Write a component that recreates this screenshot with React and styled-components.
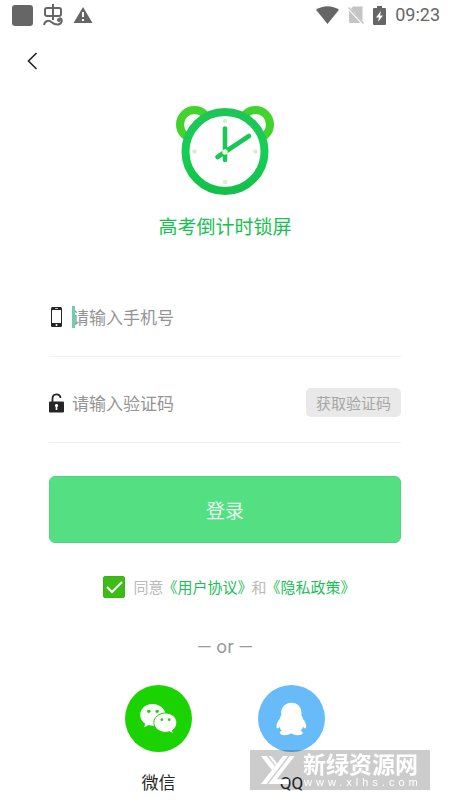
import {useState} from "react";
import styled, {createGlobalStyle} from "styled-components";

const GlobalStyle = createGlobalStyle`
    * {
        box-sizing: border-box;
    }

    body {
        margin: 0;
        background: #ffffff;
        font-family: Roboto, "Noto Sans CJK SC", sans-serif;
    }

    button, input {
        font-family: inherit;
    }
`;

const Page = styled.div`
    display: flex;
    flex-flow: column;
`;

const StatusBar = styled.header`
    display: flex;
    align-items: center;
    justify-content: space-between;
    height: 30px;
    padding: 0 10px 0 12px;
    color: #666666;
`;

const StatusGroup = styled.div`
    display: flex;
    align-items: center;
    gap: ${({gap}) => `${gap}px`};
`;

const Clock = styled.time`
    font-size: 18px;
    line-height: 30px;
`;

const NavBar = styled.nav`
    display: flex;
    align-items: center;
    height: 62px;
    padding: 0 20px;
`;

const BackButton = styled.button`
    display: flex;
    padding: 4px;
    border: 0;
    background: none;
    cursor: pointer;
`;

const Brand = styled.section`
    display: flex;
    flex-flow: column;
    align-items: center;
    gap: 17px;
    padding: 13px 0 34px;
`;

const BrandName = styled.h1`
    margin: 0;
    color: #18c14f;
    font-size: 19px;
    font-weight: 400;
    line-height: 30px;
`;

const Form = styled.form`
    display: flex;
    flex-flow: column;
    padding: 0 49px;
`;

const Field = styled.div`
    display: flex;
    align-items: center;
    gap: 8px;
    height: 80px;
    margin-bottom: 6px;
    border-bottom: 1px solid #f1f1f1;
`;

const FieldIcon = styled.label`
    display: flex;
    justify-content: center;
    width: 15px;
`;

const InputWrap = styled.div`
    position: relative;
    display: flex;
    flex: 1;
    min-width: 0;
`;

const Caret = styled.span`
    position: absolute;
    left: 0;
    top: 2px;
    width: 3px;
    height: 22px;
    background: #66d3ad;
`;

const TextInput = styled.input`
    width: 100%;
    padding: 2px 0 0;
    border: 0;
    outline: 0;
    background: none;
    color: #333333;
    font-size: 17px;
    line-height: 24px;

    &::placeholder {
        color: #949494;
        opacity: 1;
    }
`;

const CodeButton = styled.button`
    height: 29px;
    padding: 0 10px;
    border: 0;
    border-radius: 5px;
    background: #e9e9e9;
    color: #a6a6a6;
    font-size: 15px;
    white-space: nowrap;
    cursor: pointer;
`;

const LoginButton = styled.button`
    height: 67px;
    margin-top: 27px;
    border: 1px solid #4fd67c;
    border-radius: 6px;
    background: #55df83;
    color: #e6fbed;
    font-size: 19px;
    cursor: pointer;
`;

const Agreement = styled.div`
    display: flex;
    align-items: center;
    justify-content: center;
    gap: 8px;
    height: 30px;
    margin-top: 29px;
    padding-left: 8px;
    color: #b9b9b9;
    font-size: 15px;
    line-height: 30px;
    white-space: nowrap;
`;

const CheckBox = styled.span`
    display: grid;

    & > * {
        grid-area: 1 / 1;
    }

    svg {
        pointer-events: none;
    }
`;

const CheckInput = styled.input`
    appearance: none;
    width: 22px;
    height: 22px;
    margin: 0;
    border: 1px solid #37b512;
    border-radius: 2px;
    background: ${({checked}) => checked ? "#3dbb17" : "#ffffff"};
    cursor: pointer;
`;

const AgreementText = styled.span`
    padding-top: 2px;
`;

const AgreementLink = styled.a`
    margin: 0 -1px;
    color: #1abf55;
    text-decoration: none;
`;

const Divider = styled.p`
    margin: 30px 0 0;
    color: #9b9b9b;
    font-size: 19px;
    line-height: 30px;
    text-align: center;
`;

const Socials = styled.section`
    display: flex;
    justify-content: center;
    gap: 66px;
    padding-top: 23px;
`;

const SocialButton = styled.button`
    display: flex;
    flex-flow: column;
    align-items: center;
    gap: 19px;
    padding: 0;
    border: 0;
    background: none;
    color: #262626;
    font-size: 17px;
    line-height: 24px;
    cursor: pointer;
`;

const SocialCircle = styled.span`
    display: flex;
    align-items: center;
    justify-content: center;
    width: 67px;
    height: 67px;
    border-radius: 50%;
    background: ${({color}) => color};
`;

const Watermark = styled.aside`
    position: fixed;
    right: 20px;
    bottom: 10px;
    display: flex;
    gap: 6px;
    width: 180px;
    height: 40px;
    padding-left: 9px;
    background: rgba(0, 0, 0, 0.2);
    color: #ffffff;
    pointer-events: none;
`;

const WatermarkText = styled.div`
    display: flex;
    flex-flow: column;
    padding-top: 4px;
`;

const WatermarkName = styled.strong`
    font-size: 23px;
    font-weight: 700;
    line-height: 24px;
`;

const WatermarkSite = styled.span`
    padding-left: 1px;
    font-family: "Liberation Sans", sans-serif;
    font-size: 11px;
    letter-spacing: 4px;
    line-height: 8px;
`;

const BugIcon = () => (
    <svg width="20" height="22" viewBox="0 0 20 22" fill="none" stroke="#666666" strokeWidth="2">
        <rect x="2" y="4" width="16" height="8" rx="2"/>
        <path d="M10 0v16M1 21c1-5 5-5 8-2.500s8 3 9.500-.5c.8-2-.5-4-2-4"/>
        <circle cx="16" cy="16" r="1"/>
    </svg>
);

const WarningIcon = () => (
    <svg width="20" height="18" viewBox="0 0 20 18">
        <path d="M10 1L19.500 17H.5z" fill="#666666"/>
        <path d="M10 6v5M10 13v2" stroke="#ffffff" strokeWidth="2"/>
    </svg>
);

const WifiIcon = () => (
    <svg width="23" height="18" viewBox="0 0 23 18">
        <path d="M0 3.800C6.500-1 16.500-1 23 3.800L11.500 18z" fill="#666666"/>
    </svg>
);

const NoSimIcon = () => (
    <svg width="16" height="18" viewBox="0 0 16 18">
        <path d="M5 .5h9.500v15L3 3z" fill="#c4c4c4"/>
        <path d="M1 4.500V16q0 1 1 1h10.500z" fill="#c4c4c4"/>
        <path d="M.5 1.500L15.500 17.500" stroke="#c4c4c4" strokeWidth="1.500"/>
    </svg>
);

const BatteryIcon = () => (
    <svg width="13" height="19" viewBox="0 0 13 19">
        <path d="M4 0h5v2h3q1 0 1 1v15q0 1-1 1H1q-1 0-1-1V3q0-1 1-1h3z" fill="#666666"/>
        <path d="M8 5L3 11.500h3L5 16l5-6.500H7z" fill="#ffffff"/>
    </svg>
);

const AlarmLogo = () => (
    <svg width="98" height="91" viewBox="0 0 98 91" fill="none">
        <defs>
            <linearGradient id="ring" x1="0" y1="0" x2="0" y2="1">
                <stop offset="0" stopColor="#1fc457"/>
                <stop offset="0.5" stopColor="#16cf55"/>
                <stop offset="1" stopColor="#12c04a"/>
            </linearGradient>
        </defs>
        <circle cx="18.500" cy="19.500" r="14.500" stroke="#42d32f" strokeWidth="8"/>
        <circle cx="79.500" cy="19.500" r="14.500" stroke="#42d32f" strokeWidth="8"/>
        <circle cx="49" cy="46.500" r="39.500" fill="#ffffff" stroke="url(#ring)" strokeWidth="8"/>
        <g fill="#d3f0d2">
            <circle cx="49" cy="16" r="2.200"/>
            <circle cx="49" cy="77" r="2.200"/>
            <circle cx="18.500" cy="46.500" r="2.200"/>
            <circle cx="79.500" cy="46.500" r="2.200"/>
        </g>
        <path d="M49 23.500V55M73 31L41.500 52" stroke="#1ac655" strokeWidth="4.600" strokeLinecap="round"/>
        <circle cx="49" cy="47" r="2.800" fill="#e4fbd0"/>
    </svg>
);

const PhoneIcon = () => (
    <svg width="11" height="20" viewBox="0 0 11 20">
        <rect width="11" height="20" rx="1.500" fill="#252525"/>
        <rect x="1" y="3" width="9" height="13" fill="#ffffff"/>
        <path d="M4 1.500h3" stroke="#bbbbbb"/>
        <circle cx="5.500" cy="18" r="1" fill="#ffffff"/>
    </svg>
);

const UnlockIcon = () => (
    <svg width="15" height="20" viewBox="0 0 15 20">
        <path d="M3.500 9V5.500C3.500 0 11.500 0 11.500 5" fill="none" stroke="#252525" strokeWidth="1.800"/>
        <rect y="8.500" width="15" height="11" rx="1" fill="#252525"/>
        <path d="M7.500 11a1.600 1.600 0 0 1 .8 3v3H6.700v-3a1.600 1.600 0 0 1 .8-3z" fill="#ffffff"/>
    </svg>
);

const WechatIcon = () => (
    <svg width="37" height="30" viewBox="0 0 110 90" fill="#ffffff">
        <path d="M38 0C17 0 0 14 0 33c0 11 6 20 15 26l-3 11 14-7c4 1 8 2 13 2C60 65 76 51 76 33S59 0 38 0z"/>
        <path
            d="M76 27c-19 0-35 13-35 29s16 29 35 29c4 0 8-1 12-2l12 6-3-10c8-5 13-13 13-23 0-16-15-29-34-29z"
            stroke="#1bd300"
            strokeWidth="3"
        />
        <g fill="#1bd300">
            <circle cx="26" cy="22" r="5"/>
            <circle cx="51" cy="22" r="5"/>
            <circle cx="65" cy="47" r="4"/>
            <circle cx="87" cy="47" r="4"/>
        </g>
    </svg>
);

const QQIcon = () => (
    <svg width="31" height="34" viewBox="0 0 92 102" fill="#ffffff">
        <path d="M46 2C27 2 15 15 15 33v8c-3 3-4 6-4 9C4 57 0 68 1 76c1 5 5 4 9-2 1 5 4 9 7 12-5 2-7 5-6 8 3 8 25 8 34 0 9 8 32 8 35 0 1-3-2-6-7-8 4-4 6-7 8-12 4 6 8 7 9 2 1-8-3-19-10-26 0-3-1-6-4-9v-8C76 15 65 2 46 2z"/>
    </svg>
);

const WatermarkLogo = () => (
    <svg width="38" height="40" viewBox="8 0 114 120" fill="#ffffff">
        <path d="M14 18h17l25 31-9 12z"/>
        <path d="M37 18h8l17 22-4 6z"/>
        <path d="M80 18h15L31 102H14z"/>
        <path d="M101 18h14L61 88h36v14H36z"/>
    </svg>
);

const App = () => {
    const [phone, setPhone] = useState("");
    const [code, setCode] = useState("");
    const [agreed, setAgreed] = useState(true);

    return (
        <Page>
            <GlobalStyle/>
            <StatusBar>
                <StatusGroup gap={10}>
                    <svg width="21" height="21"><rect width="21" height="21" rx="3" fill="#666666"/></svg>
                    <BugIcon/>
                    <WarningIcon/>
                </StatusGroup>
                <StatusGroup gap={9}>
                    <WifiIcon/>
                    <NoSimIcon/>
                    <BatteryIcon/>
                    <Clock>09:23</Clock>
                </StatusGroup>
            </StatusBar>
            <NavBar>
                <BackButton aria-label="返回">
                    <svg width="16" height="18" viewBox="0 0 16 18" fill="none" stroke="#222222" strokeWidth="1.600">
                        <path d="M12.500 1L4.500 9l8 8"/>
                    </svg>
                </BackButton>
            </NavBar>
            <Brand>
                <AlarmLogo/>
                <BrandName>高考倒计时锁屏</BrandName>
            </Brand>
            <Form onSubmit={(e) => e.preventDefault()}>
                <Field>
                    <FieldIcon htmlFor="phone" aria-label="手机号"><PhoneIcon/></FieldIcon>
                    <InputWrap>
                        <TextInput
                            id="phone"
                            type="tel"
                            placeholder="请输入手机号"
                            value={phone}
                            onChange={(e) => setPhone(e.target.value)}
                        />
                        {phone === "" && <Caret/>}
                    </InputWrap>
                </Field>
                <Field>
                    <FieldIcon htmlFor="code" aria-label="验证码"><UnlockIcon/></FieldIcon>
                    <InputWrap>
                        <TextInput
                            id="code"
                            placeholder="请输入验证码"
                            value={code}
                            onChange={(e) => setCode(e.target.value)}
                        />
                    </InputWrap>
                    <CodeButton type="button">获取验证码</CodeButton>
                </Field>
                <LoginButton type="submit">登录</LoginButton>
                <Agreement>
                    <CheckBox>
                        <CheckInput
                            id="agree"
                            type="checkbox"
                            checked={agreed}
                            onChange={(e) => setAgreed(e.target.checked)}
                        />
                        <svg width="22" height="22" fill="none" stroke="#ffffff" strokeWidth="2">
                            <path d="M4 11l5 5 10-10"/>
                        </svg>
                    </CheckBox>
                    <AgreementText>
                        <label htmlFor="agree">同意</label>
                        <AgreementLink href="#terms">《用户协议》</AgreementLink>
                        和
                        <AgreementLink href="#privacy">《隐私政策》</AgreementLink>
                    </AgreementText>
                </Agreement>
            </Form>
            <Divider>— or —</Divider>
            <Socials>
                <SocialButton>
                    <SocialCircle color="#1bd300"><WechatIcon/></SocialCircle>
                    微信
                </SocialButton>
                <SocialButton>
                    <SocialCircle color="#68bbf9"><QQIcon/></SocialCircle>
                    QQ
                </SocialButton>
            </Socials>
            <Watermark>
                <WatermarkLogo/>
                <WatermarkText>
                    <WatermarkName>新绿资源网</WatermarkName>
                    <WatermarkSite>www.xlhs.com</WatermarkSite>
                </WatermarkText>
            </Watermark>
        </Page>
    );
};

export default App;
